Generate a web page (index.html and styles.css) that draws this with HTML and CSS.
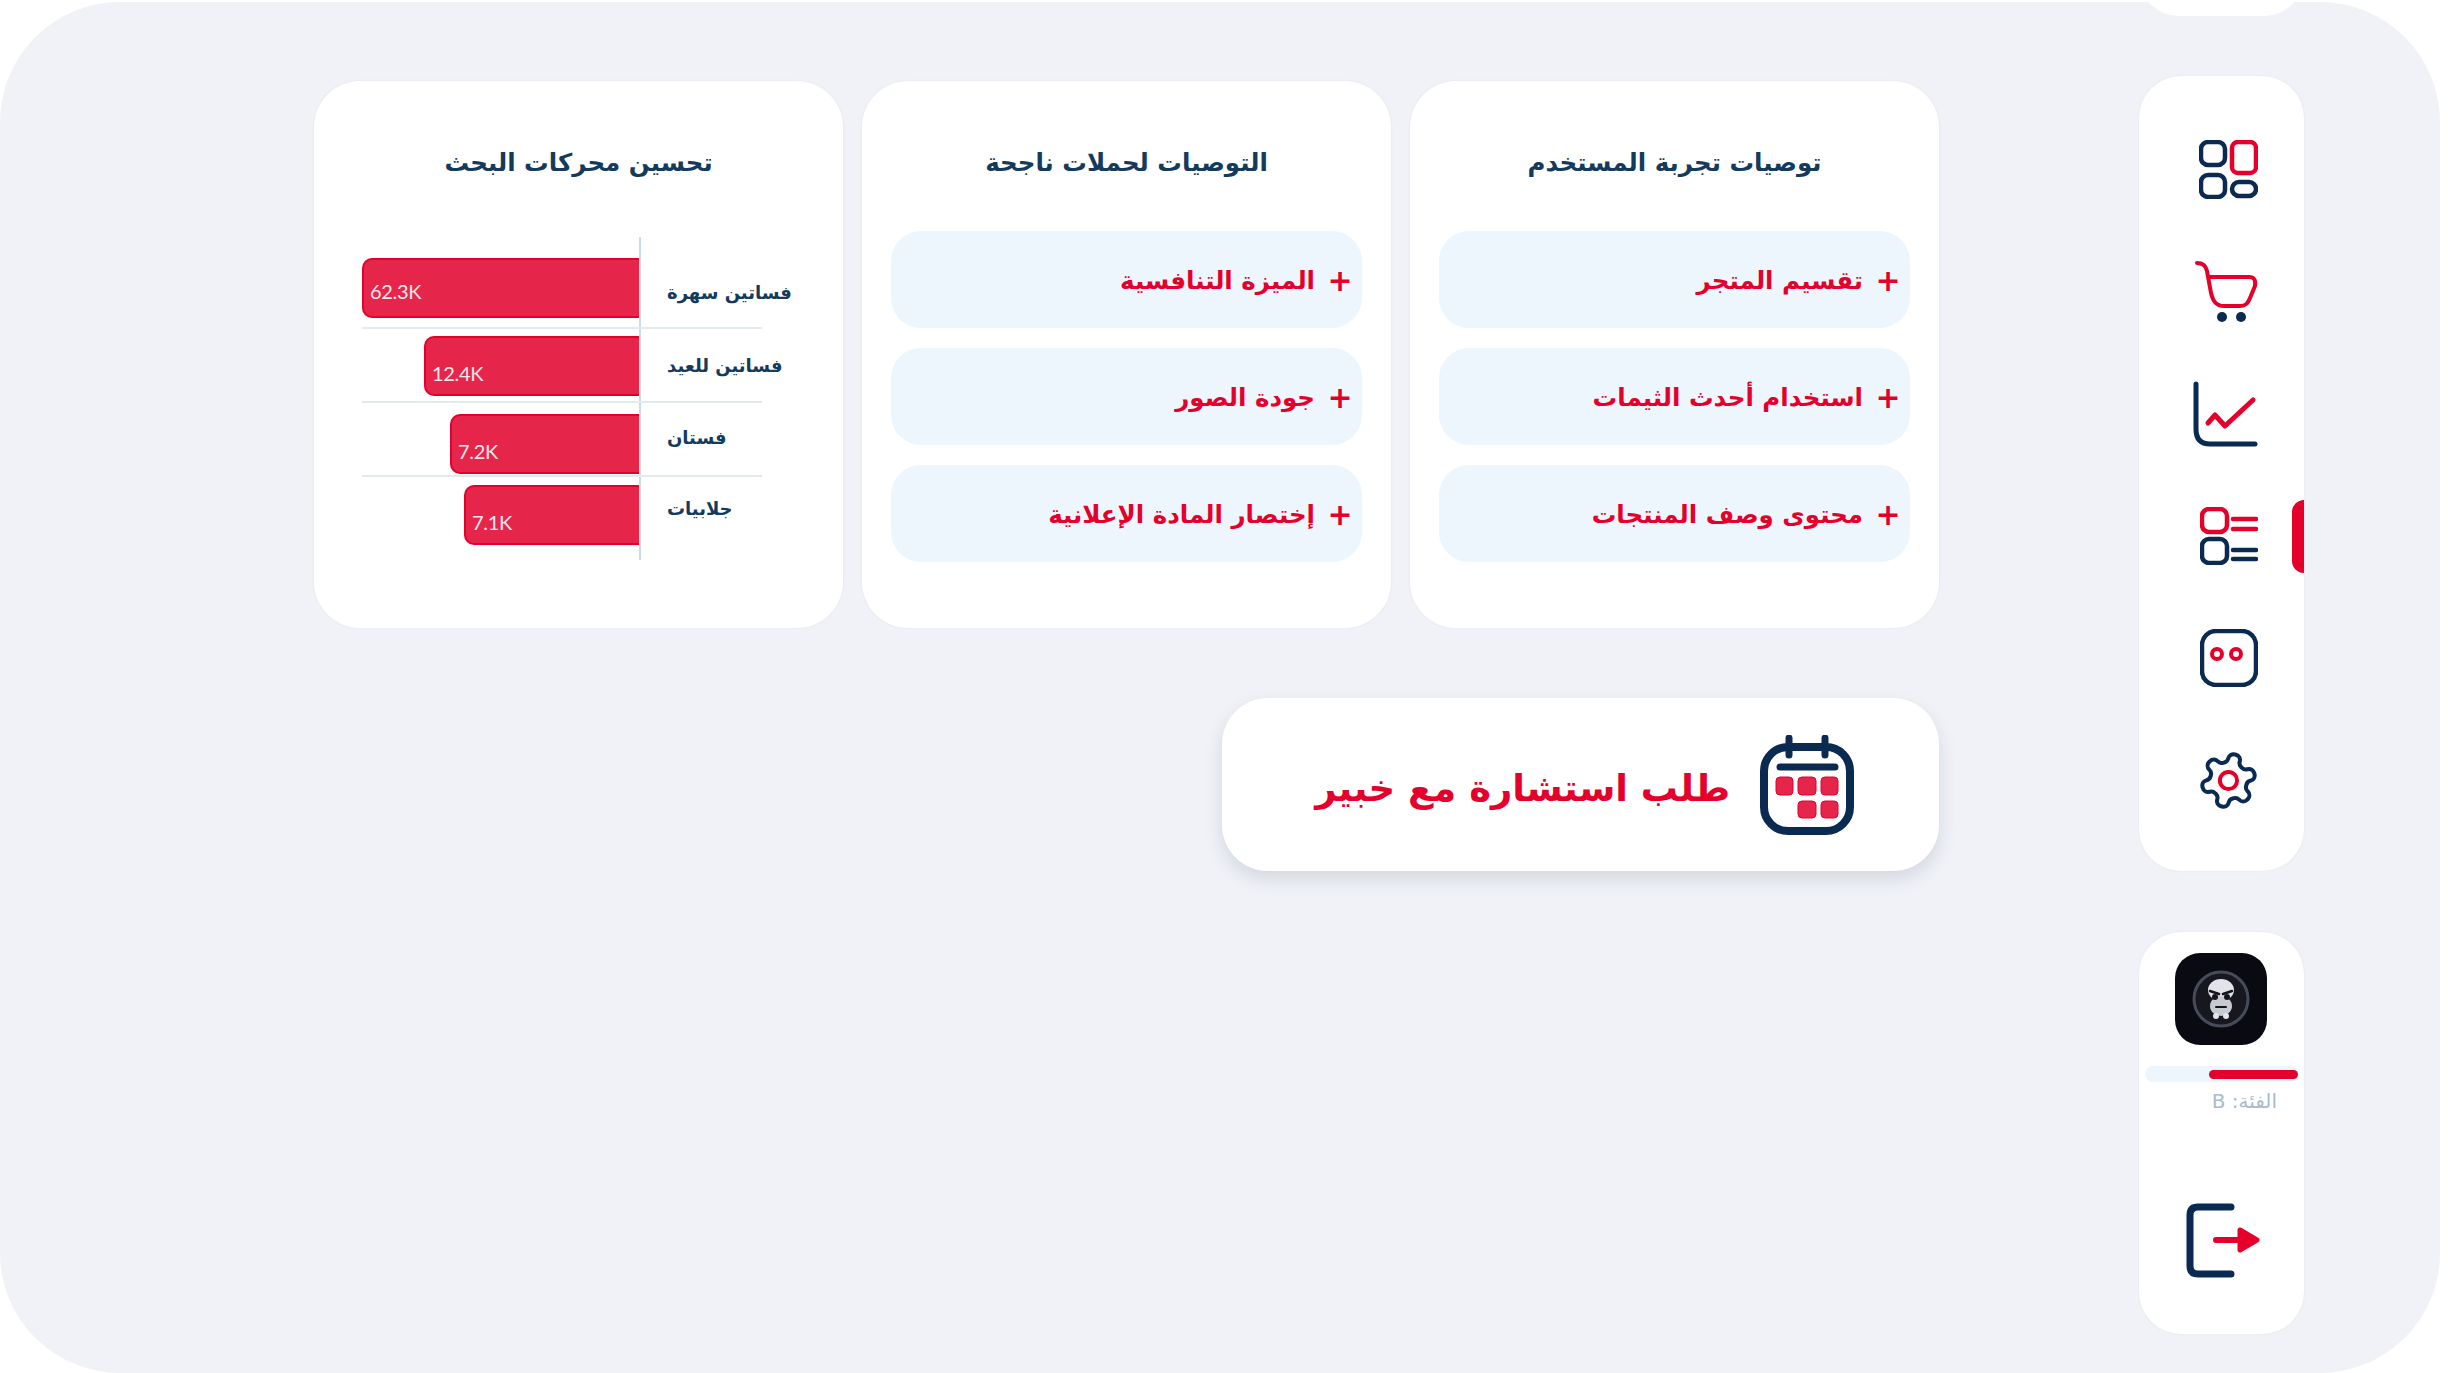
FILE: index.html
```html
<!DOCTYPE html>
<html lang="ar" dir="rtl">
<head>
<meta charset="UTF-8" />
<meta name="viewport" content="width=device-width, initial-scale=1" />
<title>Dashboard</title>
<link rel="stylesheet" href="styles.css">
</head>
<body>

<div class="panel">

  <aside class="sidebar">
    <div class="stub"></div>

    <nav class="side-card nav">
      <span class="nav-marker"></span>
      <svg class="nav-icon" width="59" height="59" viewBox="0 0 59 59" fill="none" stroke-width="4.5">
        <rect class="navy" x="2" y="2" width="24" height="23" rx="7" />
        <rect class="red" x="33" y="2" width="24" height="31" rx="6" />
        <rect class="navy" x="2" y="35" width="24" height="22" rx="7" />
        <rect class="navy" x="33" y="42" width="24" height="14" rx="7" />
      </svg>
      <svg class="nav-icon cart" width="64" height="63" viewBox="0 0 64 63" fill="none" stroke-width="4" stroke-linecap="round" stroke-linejoin="round">
        <path class="red" d="M3 3C9 3 12 6 13 11L17 33C19 41 22 46 30 46H46C52 46 54 43 56 38L61 26C62 20 60 17 55 17H15" />
        <circle class="navy-fill" cx="28" cy="57" r="5" />
        <circle class="navy-fill" cx="47" cy="57" r="5" />
      </svg>
      <svg class="nav-icon stats" width="66" height="66" viewBox="0 0 66 66" fill="none" stroke-width="5" stroke-linecap="round" stroke-linejoin="round">
        <path class="navy" d="M4 3V48Q4 63 18 63H63" />
        <path class="red" d="M16 42L23 34L33 45L61 19" />
      </svg>
      <svg class="nav-icon" width="58" height="58" viewBox="0 0 58 58" fill="none" stroke-width="4.5" stroke-linecap="round">
        <rect class="red" x="2" y="2" width="25" height="23" rx="7" />
        <path class="red" d="M33 12H56M33 22H56" />
        <rect class="navy" x="2" y="32" width="25" height="24" rx="7" />
        <path class="navy" d="M33 43H56M33 52H56" />
      </svg>
      <svg class="nav-icon" width="58" height="58" viewBox="0 0 58 58" fill="none">
        <rect class="navy" x="2" y="2" width="54" height="54" rx="14" stroke-width="4.5" />
        <circle class="red" cx="17" cy="25" r="5" stroke-width="4" />
        <circle class="red" cx="36" cy="25" r="5" stroke-width="4" />
      </svg>
      <svg class="nav-icon" width="59" height="59" viewBox="1 1 22 22" fill="none" stroke-linecap="round" stroke-linejoin="round">
        <path class="navy" stroke-width="1.5" transform="rotate(15 12 12)" d="M12.22 2h-.44a2 2 0 0 0-2 2v.18a2 2 0 0 1-1 1.73l-.43.25a2 2 0 0 1-2 0l-.15-.08a2 2 0 0 0-2.73.73l-.22.38a2 2 0 0 0 .73 2.73l.15.1a2 2 0 0 1 1 1.72v.51a2 2 0 0 1-1 1.74l-.15.09a2 2 0 0 0-.73 2.73l.22.38a2 2 0 0 0 2.73.73l.15-.08a2 2 0 0 1 2 0l.43.25a2 2 0 0 1 1 1.73V20a2 2 0 0 0 2 2h.44a2 2 0 0 0 2-2v-.18a2 2 0 0 1 1-1.73l.43-.25a2 2 0 0 1 2 0l.15.08a2 2 0 0 0 2.73-.73l.22-.39a2 2 0 0 0-.73-2.73l-.15-.08a2 2 0 0 1-1-1.74v-.5a2 2 0 0 1 1-1.74l.15-.09a2 2 0 0 0 .73-2.73l-.22-.38a2 2 0 0 0-2.73-.73l-.15.08a2 2 0 0 1-2 0l-.43-.25a2 2 0 0 1-1-1.73V4a2 2 0 0 0-2-2z" />
        <circle class="red" cx="12" cy="12" r="3.2" stroke-width="1.5" />
      </svg>
    </nav>

    <div class="side-card account">
      <svg class="avatar" width="92" height="92" viewBox="0 0 92 92">
        <rect width="92" height="92" rx="25" fill="#0a0a12" />
        <circle cx="46" cy="46" r="27" fill="#16171f" stroke="#474b59" stroke-width="3" />
        <ellipse cx="46" cy="37" rx="13" ry="11" fill="#e2e4ea" />
        <ellipse cx="46" cy="53" rx="11" ry="10" fill="#c6cad3" />
        <path d="M35 38L44 41M57 38L48 41" stroke="#14151c" stroke-width="2.5" stroke-linecap="round" />
        <circle cx="40" cy="44" r="3" fill="#14151c" />
        <circle cx="52" cy="44" r="3" fill="#14151c" />
        <path d="M41 54H51" stroke="#14151c" stroke-width="2" stroke-linecap="round" />
        <circle cx="41" cy="63" r="3" fill="#e3e5ea" />
        <circle cx="51" cy="63" r="3" fill="#e3e5ea" />
      </svg>
      <div class="level-track"><div class="level-fill"></div></div>
      <div class="level-label">الفئة: B</div>
      <svg class="exit" width="74" height="76" viewBox="0 0 74 76" fill="none" stroke-linecap="round" stroke-linejoin="round">
        <path class="navy" stroke-width="7" d="M45 4H12Q4 4 4 12V63Q4 71 12 71H45" />
        <path class="red" stroke-width="6" d="M30 37H56" />
        <path class="red red-fill" stroke-width="5" d="M54 27L71 37L54 47Z" />
      </svg>
    </div>
  </aside>

  <main class="content">
    <section class="cards">

      <article class="card">
        <h2>توصيات تجربة المستخدم</h2>
        <ul class="tips">
          <li><span class="plus">+</span>تقسيم المتجر</li>
          <li><span class="plus">+</span>استخدام أحدث الثيمات</li>
          <li><span class="plus">+</span>محتوى وصف المنتجات</li>
        </ul>
      </article>

      <article class="card">
        <h2>التوصيات لحملات ناجحة</h2>
        <ul class="tips">
          <li><span class="plus">+</span>الميزة التنافسية</li>
          <li><span class="plus">+</span>جودة الصور</li>
          <li><span class="plus">+</span>إختصار المادة الإعلانية</li>
        </ul>
      </article>

      <article class="card">
        <h2>تحسين محركات البحث</h2>
        <div class="chart" dir="ltr">
          <div class="chart-row">
            <div class="bar-cell"><div class="bar" style="width: 277px">62.3K</div></div>
            <div class="chart-label" dir="rtl">فساتين سهرة</div>
          </div>
          <div class="chart-row">
            <div class="bar-cell"><div class="bar" style="width: 215px">12.4K</div></div>
            <div class="chart-label" dir="rtl">فساتين للعيد</div>
          </div>
          <div class="chart-row">
            <div class="bar-cell"><div class="bar" style="width: 189px">7.2K</div></div>
            <div class="chart-label" dir="rtl">فستان</div>
          </div>
          <div class="chart-row">
            <div class="bar-cell"><div class="bar" style="width: 175px">7.1K</div></div>
            <div class="chart-label" dir="rtl">جلابيات</div>
          </div>
        </div>
      </article>

    </section>

    <a class="cta" href="#">
      <svg width="95" height="100" viewBox="0 0 95 100" fill="none">
        <rect class="navy" x="4" y="12" width="86" height="84" rx="24" stroke-width="8" />
        <path class="navy" stroke-width="7" stroke-linecap="round" d="M29 3V20M65 3V20M20 32H75" />
        <rect class="red-block" x="16" y="42" width="17" height="18" rx="4" />
        <rect class="red-block" x="38" y="42" width="18" height="18" rx="4" />
        <rect class="red-block" x="61" y="42" width="17" height="18" rx="4" />
        <rect class="red-block" x="38" y="66" width="18" height="17" rx="4" />
        <rect class="red-block" x="61" y="66" width="17" height="17" rx="4" />
      </svg>
      <span>طلب استشارة مع خبير</span>
    </a>
  </main>

</div>

</body>
</html>
```

FILE: styles.css
```css
/* Reset */
*, *::before, *::after {
  box-sizing: border-box;
  margin: 0; padding: 0;
}
:root {
  --bg: #f0f2f7;
  --red: #e4002b;
  --bar: #e6254a;
  --navy: #0b2a52;
  --title: #143a5c;
  --tip-bg: #edf6fd;
}
html, body {
  height: 100%;
  overflow: hidden;
  background: #ffffff;
  font-family: "DejaVu Sans", "Noto Sans", sans-serif;
}

/* icon colours */
.navy { stroke: var(--navy); }
.red { stroke: var(--red); }
.navy-fill { fill: var(--navy); }
.red-fill { fill: var(--red); }
.red-block { fill: #e6254a; stroke: var(--red); stroke-width: 1; }

.panel {
  display: flex;
  gap: 200px;
  width: 2440px;
  height: 1371px;
  margin: 2px 8px 0 0;
  padding-right: 136px;
  background: var(--bg);
  border-radius: 120px;
}

/* sidebar */
.sidebar {
  width: 165px;
  flex-shrink: 0;
}
.stub {
  height: 14px;
  margin-bottom: 60px;
  overflow: hidden;
}
.stub::before {
  content: "";
  display: block;
  height: 80px;
  margin-top: -66px;
  background: #fff;
  border-radius: 40px;
}
.side-card {
  background: #fff;
  border-radius: 42px;
  box-shadow: 0 0 3px rgba(20, 40, 80, 0.06);
}
.nav {
  position: relative;
  display: grid;
  grid-auto-rows: 122.3px;
  align-items: center;
  justify-items: center;
  height: 795px;
  padding: 32px 0 0 14px;
  margin-bottom: 61px;
}
.nav-marker {
  position: absolute;
  top: 424px;
  right: 0;
  width: 12px;
  height: 73px;
  background: var(--red);
  border-radius: 12px 0 0 12px;
}
.nav-icon { display: block; }
.cart { margin-right: 5px; }
.stats { margin-right: 8px; }

.account {
  display: flex;
  flex-direction: column;
  height: 402px;
  padding-top: 21px;
}
.avatar {
  display: block;
  align-self: center;
  margin-right: 1px;
}
.level-track {
  display: flex;
  align-items: center;
  height: 16px;
  margin: 21px 6px 0;
  background: var(--tip-bg);
  border-radius: 8px;
}
.level-fill {
  width: 89px;
  height: 9px;
  background: var(--red);
  border-radius: 5px;
}
.level-label {
  margin: 7px 27px 0 0;
  font-size: 20px;
  line-height: 24px;
  white-space: nowrap;
  color: #a9bccb;
}
.exit {
  display: block;
  align-self: center;
  margin: 90px -2px 0 0;
}

/* main column */
.content {
  width: 1625px;
  padding-top: 79px;
}
.cards {
  display: grid;
  grid-template-columns: repeat(3, 529px);
  gap: 19px;
}
.card {
  height: 547px;
  padding: 0 29px;
  background: #fff;
  border-radius: 46px;
  box-shadow: 0 0 3px rgba(20, 40, 80, 0.06);
}
.card h2 {
  height: 150px;
  padding-top: 60px;
  font-size: 24.5px;
  line-height: 44px;
  font-weight: 700;
  text-align: center;
  color: var(--title);
}
.tips {
  list-style: none;
  display: flex;
  flex-direction: column;
  gap: 20px;
}
.tips li {
  display: flex;
  align-items: center;
  height: 97px;
  padding: 2px 9px 0 0;
  background: var(--tip-bg);
  border-radius: 30px;
  font-size: 24.5px;
  font-weight: 700;
  color: var(--red);
}
.plus {
  width: 26px;
  margin-left: 12px;
  text-align: center;
  font-size: 30px;
  line-height: 1;
}

/* bars */
.chart {
  margin-left: 19px;
  margin-top: 6px;
}
.chart-row {
  display: flex;
  width: 400px;
  border-bottom: 2px solid #e3eaef;
}
.chart-row:last-child { border-bottom: 0; }
.bar-cell {
  display: flex;
  flex: none;
  justify-content: flex-end;
  width: 279px;
  border-right: 2px solid #cddbe4;
}
.chart-row:nth-child(1) .bar-cell { padding: 21px 0 9px; }
.chart-row:nth-child(2) .bar-cell { padding: 7px 0 5px; }
.chart-row:nth-child(3) .bar-cell { padding: 11px 0 1px; }
.chart-row:nth-child(4) .bar-cell { padding: 8px 0 15px; }
.bar {
  height: 60px;
  padding: 24px 0 0 6px;
  background: var(--bar);
  border: 2px solid var(--red);
  border-right: 0;
  border-radius: 10px 0 0 10px;
  font-family: Lato, "Noto Sans", sans-serif;
  font-size: 20px;
  line-height: 22px;
  letter-spacing: -0.3px;
  color: #ffe9ee;
}
.chart-row:first-child .bar { padding-top: 20px; }
.chart-label {
  margin-left: 26px;
  font-size: 18px;
  line-height: 30px;
  font-weight: 700;
  white-space: nowrap;
  color: var(--title);
}
.chart-row:nth-child(1) .chart-label { margin-top: 41px; }
.chart-row:nth-child(2) .chart-label { margin-top: 22px; }
.chart-row:nth-child(3) .chart-label { margin-top: 20px; }
.chart-row:nth-child(4) .chart-label { margin-top: 17px; }

/* call to action */
.cta {
  display: flex;
  align-items: center;
  gap: 30px;
  width: 717px;
  height: 173px;
  margin-top: 70px;
  padding: 0 84px 0 0;
  background: #fff;
  border-radius: 46px;
  box-shadow: 0 8px 18px rgba(20, 40, 80, 0.13);
  font-size: 37px;
  font-weight: 700;
  color: var(--red);
  text-decoration: none;
}
.cta svg { flex-shrink: 0; }
.cta span { padding-top: 7px; }
```
